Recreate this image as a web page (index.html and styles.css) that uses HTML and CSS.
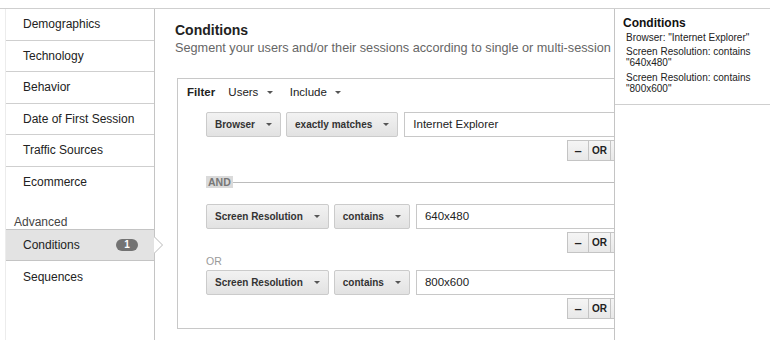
FILE: index.html
```html
<!DOCTYPE html>
<html lang="en">
<head>
  <meta charset="UTF-8">
  <title>Segment Conditions</title>
  <link rel="stylesheet" href="styles.css">
</head>
<body>
  <div class="page">
    <div class="sidebar">
      <div class="nav-item">Demographics</div>
      <div class="nav-item">Technology</div>
      <div class="nav-item">Behavior</div>
      <div class="nav-item">Date of First Session</div>
      <div class="nav-item">Traffic Sources</div>
      <div class="nav-item last">Ecommerce</div>
      <div class="nav-label">Advanced</div>
      <div class="nav-item active">
        Conditions
        <span class="badge">1</span>
        <svg class="pointer" width="10" height="18" viewBox="0 0 10 18">
          <path d="M0 0.5 L8.5 9 L0 17.5 Z" fill="#fff"/>
          <path d="M0 0.5 L8.5 9 L0 17.5" fill="none" stroke="#b8b8b8" stroke-width="1"/>
        </svg>
      </div>
      <div class="nav-item last">Sequences</div>
    </div>

    <div class="main">
      <h2 class="title">Conditions</h2>
      <p class="subtitle">Segment your users and/or their sessions according to single or multi-session criteria.</p>

      <div class="filter-box">
        <div class="filter-head">
          <b>Filter</b>
          <span class="menu">Users <i class="caret"></i></span>
          <span class="menu">Include <i class="caret"></i></span>
        </div>

        <div class="cond first">
          <div class="cond-row">
            <span class="btn">Browser <i class="caret"></i></span>
            <span class="btn">exactly matches <i class="caret"></i></span>
            <div class="value">Internet Explorer</div>
          </div>
          <div class="ops">
            <span class="op minus">&ndash;</span>
            <span class="op">OR</span>
            <span class="op wide">AND</span>
          </div>
        </div>

        <div class="and-divider">
          <span class="and">AND</span>
          <div class="rule"></div>
        </div>

        <div class="cond">
          <div class="cond-row">
            <span class="btn">Screen Resolution <i class="caret"></i></span>
            <span class="btn">contains <i class="caret"></i></span>
            <div class="value">640x480</div>
          </div>
          <div class="ops">
            <span class="op minus">&ndash;</span>
            <span class="op">OR</span>
            <span class="op wide">AND</span>
          </div>
        </div>

        <div class="or-label">OR</div>

        <div class="cond">
          <div class="cond-row">
            <span class="btn">Screen Resolution <i class="caret"></i></span>
            <span class="btn">contains <i class="caret"></i></span>
            <div class="value">800x600</div>
          </div>
          <div class="ops">
            <span class="op minus">&ndash;</span>
            <span class="op">OR</span>
            <span class="op wide">AND</span>
          </div>
        </div>
      </div>
    </div>

    <div class="summary">
      <div class="summary-box">
        <h3>Conditions</h3>
        <p>Browser: "Internet Explorer"</p>
        <p>Screen Resolution: contains "640x480"</p>
        <p>Screen Resolution: contains "800x600"</p>
      </div>
    </div>
  </div>
</body>
</html>
```

FILE: styles.css
```css
* {
  box-sizing: border-box;
}

body {
  margin: 0;
  font-family: 'Liberation Sans', Arial, sans-serif;
  color: #222;
  background: #fff;
}

.page {
  margin-top: 8px;
  height: 332px;
  border-top: 1px solid #cfcfcf;
  display: flex;
  overflow: hidden;
}

/* left navigation */

.sidebar {
  flex: 0 0 150px;
  margin-left: 5px;
  border-left: 1px solid #ececec;
  border-right: 1px solid #c4c4c4;
}

.nav-item {
  position: relative;
  height: 31.5px;
  padding-left: 17px;
  display: flex;
  align-items: center;
  font-size: 12px;
  border-bottom: 1px solid #cfcfcf;
}

.nav-item.last {
  border-bottom: none;
}

.nav-label {
  margin-top: 17px;
  padding-left: 8px;
  font-size: 12px;
  line-height: 14px;
  color: #444;
}

.nav-item.active {
  height: 32px;
  background: #e3e3e3;
  border-top: 1px solid #c4c4c4;
  border-bottom: 1px solid #c4c4c4;
}

.badge {
  margin-left: auto;
  margin-right: 16px;
  width: 22px;
  height: 12px;
  border-radius: 6px;
  background: #737373;
  color: #fff;
  font-size: 10px;
  font-weight: bold;
  line-height: 12px;
  text-align: center;
}

.pointer {
  position: absolute;
  left: 100%;
  top: 6px;
}

/* main area */

.main {
  flex: 1;
  min-width: 0;
  overflow: hidden;
  padding: 12px 0 0 20px;
  white-space: nowrap;
}

.title {
  margin: 0;
  font-size: 14px;
  line-height: 18px;
  color: #222;
}

.subtitle {
  margin: 1px 0 0;
  font-size: 12.7px;
  line-height: 17px;
  color: #666;
}

.filter-box {
  margin: 21px 0 0 2px;
  width: 520px;
  border: 1px solid #c8c8c8;
  padding: 6px 0 9px 0;
}

.filter-head {
  padding-left: 9px;
  font-size: 11.5px;
  line-height: 14px;
  color: #222;
}

.filter-head b {
  margin-right: 10px;
}

.menu {
  margin-right: 14px;
}

.caret {
  display: inline-block;
  width: 0;
  height: 0;
  margin-left: 5px;
  vertical-align: middle;
  border-left: 3px solid transparent;
  border-right: 3px solid transparent;
  border-top: 3.5px solid #555;
}

.cond {
  margin-left: 28px;
  width: 444px;
}

.cond.first {
  margin-top: 13px;
}

.cond-row {
  display: flex;
  gap: 5px;
  height: 25px;
}

.btn {
  display: flex;
  align-items: center;
  padding: 0 8px 0 8px;
  font-size: 10px;
  font-weight: bold;
  color: #333;
  background: linear-gradient(#f2f2f2, #e2e2e2);
  border: 1px solid #cbcbcb;
  border-radius: 2px;
}

.btn .caret {
  margin-left: 11px;
}

.value {
  flex: 1;
  margin-left: 1px;
  border: 1px solid #c8c8c8;
  padding-left: 8px;
  font-size: 11.5px;
  line-height: 23px;
  color: #222;
}

.ops {
  display: flex;
  justify-content: flex-end;
  margin-top: 3px;
  height: 21px;
}

.op {
  width: 23px;
  display: flex;
  align-items: center;
  justify-content: center;
  font-size: 10px;
  font-weight: bold;
  color: #222;
  background: linear-gradient(#f5f5f5, #e8e8e8);
  border: 1px solid #c4c4c4;
  margin-left: -1px;
}

.op.minus {
  width: 22px;
  font-size: 13px;
}

.op.wide {
  width: 40px;
}

.and-divider {
  display: flex;
  align-items: center;
  margin: 15px 0 0 28px;
  height: 12px;
}

.and {
  padding: 0 2px;
  background: #dadada;
  color: #777;
  font-size: 10.5px;
  font-weight: bold;
  line-height: 12px;
}

.rule {
  flex: 1;
  border-top: 1px solid #bcbcbc;
}

.and-divider + .cond {
  margin-top: 16px;
}

.or-label {
  margin: 2px 0 0 28px;
  font-size: 10.5px;
  line-height: 12px;
  color: #9a9a9a;
}

.or-label + .cond {
  margin-top: 3px;
}

/* right summary */

.summary {
  flex: 0 0 156px;
  border-left: 1px solid #c4c4c4;
}

.summary-box {
  padding: 7px 8px 10px 8px;
  border-bottom: 1px solid #cfcfcf;
}

.summary-box h3 {
  margin: 0;
  font-size: 12px;
  line-height: 14px;
  color: #111;
}

.summary-box p {
  margin: 3.5px 0 0 3px;
  font-size: 10px;
  line-height: 11px;
  color: #222;
}

.summary-box h3 + p {
  margin-top: 1.5px;
}
```
